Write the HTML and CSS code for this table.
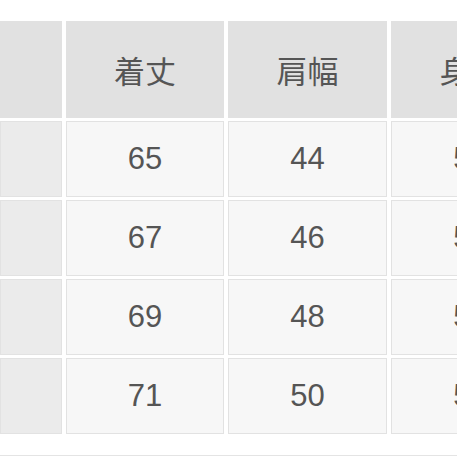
FILE: index.html
```html
<!DOCTYPE html>
<html lang="ja">
<head>
<meta charset="utf-8">
<link rel="stylesheet" href="styles.css">
</head>
<body>
<div class="page">
  <div class="table">
    <div class="row head">
      <div class="cell first"></div>
      <div class="cell">着丈</div>
      <div class="cell">肩幅</div>
      <div class="cell">身幅</div>
      <div class="cell">袖丈</div>
    </div>
    <div class="row body">
      <div class="cell first"></div>
      <div class="cell">65</div>
      <div class="cell">44</div>
      <div class="cell">52</div>
      <div class="cell">20</div>
    </div>
    <div class="row body">
      <div class="cell first"></div>
      <div class="cell">67</div>
      <div class="cell">46</div>
      <div class="cell">54</div>
      <div class="cell">21</div>
    </div>
    <div class="row body">
      <div class="cell first"></div>
      <div class="cell">69</div>
      <div class="cell">48</div>
      <div class="cell">56</div>
      <div class="cell">22</div>
    </div>
    <div class="row body">
      <div class="cell first"></div>
      <div class="cell">71</div>
      <div class="cell">50</div>
      <div class="cell">58</div>
      <div class="cell">23</div>
    </div>
  </div>
  <div class="rule"></div>
</div>
</body>
</html>
```
FILE: styles.css
```css
html, body {
  margin: 0;
  padding: 0;
  background: #ffffff;
  overflow: hidden;
}
.page {
  width: 457px;
  height: 457px;
  overflow: hidden;
  padding-top: 21px;
  box-sizing: border-box;
}
.table {
  display: flex;
  flex-direction: column;
  gap: 3px;
  width: 720px;
}
.row {
  display: grid;
  grid-template-columns: 62px 158px 159px 159px 159px;
  column-gap: 4px;
}
.head {
  height: 97px;
}
.body {
  height: 76px;
}
.cell {
  display: flex;
  align-items: center;
  justify-content: center;
  font-family: "Liberation Sans", "Noto Sans CJK JP", sans-serif;
  font-size: 31px;
  color: #555555;
  box-sizing: border-box;
}
.head .cell {
  background: #e1e1e1;
}
.body .cell {
  background: #f7f7f7;
  border: 1px solid #e2e2e2;
}
.body .cell.first {
  background: #ebebeb;
}
.rule {
  margin-top: 21px;
  border-top: 1px solid #e4e4e4;
}
```
